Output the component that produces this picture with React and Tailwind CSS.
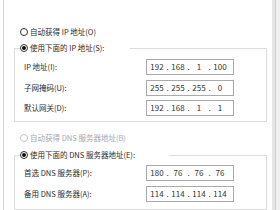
import React from 'react';

const font = "font-['Microsoft_YaHei','Noto_Sans_CJK_SC','Noto_Sans',sans-serif]";

function Radio({ checked, disabled, label }) {
  return (
    <span className="flex items-center gap-[2px] h-[14px]">
      <span
        className={`w-[8px] h-[8px] rounded-full border flex items-center justify-center bg-white ${
          disabled ? 'border-[#c4c4c4]' : 'border-[#333]'
        }`}
      >
        {checked && <span className="w-[4px] h-[4px] rounded-full bg-[#111]" />}
      </span>
      <span className={`text-[7.5px] leading-[14px] whitespace-nowrap ${disabled ? 'text-[#a8a8a8]' : 'text-[#2b2b2b]'}`}>{label}</span>
    </span>
  );
}

/* ip field: four octets split by dots */
function IpBox({ parts }) {
  return (
    <div className="flex h-[16px] w-[88px] items-center border border-[#aaaaaa] bg-white pl-[1px]">
      {parts.map((p, i) => (
        <div key={i} className="flex w-[21px] items-center">
          <span className="w-[18px] text-center text-[8px] leading-[14px] text-[#333]">{p}</span>
          {i < 3 && <span className="w-[3px] text-center text-[8px] leading-[14px] text-[#333]">.</span>}
        </div>
      ))}
    </div>
  );
}

function Row({ label, parts }) {
  return (
    <div className="flex h-[16px] items-center">
      <span className="w-[122px] text-[7.5px] leading-[14px] text-[#2b2b2b]">{label}</span>
      <IpBox parts={parts} />
    </div>
  );
}

function Group({ header, headerWidth, children, className }) {
  return (
    <div className={`relative border border-[#dcdcdc] pl-[9px] ${className}`}>
      {/* radio header sits over the top border */}
      <div className={`absolute left-[5px] top-[-8px] bg-white ${headerWidth}`}>{header}</div>
      {children}
    </div>
  );
}

export default function App() {
  return (
    <div className={`flex h-[210px] w-[280px] overflow-hidden bg-white ${font}`}>
      <div className="w-[3px] bg-white" />
      <div className="flex-1 border-l border-[#d6d6d6] pl-[10px] pr-[5px] pt-[25px]">
        <div className="pl-[6px]">
          <Radio label="自动获得 IP 地址(O)" />
        </div>

        <Group
          className="mt-[9px] pb-[5px]"
          headerWidth="w-[110px]"
          header={<Radio checked label="使用下面的 IP 地址(S):" />}
        >
          <div className="flex flex-col gap-[4.5px] pt-[10px]">
            <Row label="IP 地址(I):" parts={['192', '168', '1', '100']} />
            <Row label="子网掩码(U):" parts={['255', '255', '255', '0']} />
            <Row label="默认网关(D):" parts={['192', '168', '1', '1']} />
          </div>
        </Group>

        <div className="mt-[9px] pl-[6px]">
          <Radio disabled label="自动获得 DNS 服务器地址(B)" />
        </div>

        <Group
          className="mt-[10px] pb-[7px]"
          headerWidth="w-[149px]"
          header={<Radio checked label="使用下面的 DNS 服务器地址(E):" />}
        >
          <div className="flex flex-col gap-[5px] pt-[9px]">
            <Row label="首选 DNS 服务器(P):" parts={['180', '76', '76', '76']} />
            <Row label="备用 DNS 服务器(A):" parts={['114', '114', '114', '114']} />
          </div>
        </Group>
      </div>
      <div className="flex w-[8px]">
        <div className="w-[3px] bg-[#e6e6e6]" />
        <div className="w-[1px] bg-[#cfcfcf]" />
        <div className="flex-1 bg-[#f0f0f0]" />
      </div>
    </div>
  );
}
